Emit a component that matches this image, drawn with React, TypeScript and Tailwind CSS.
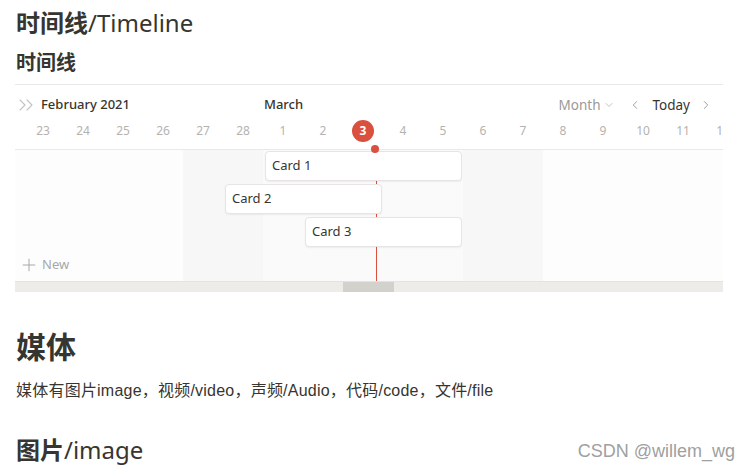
import React from "react";
import { ChevronsRight, ChevronDown, ChevronLeft, ChevronRight, Plus } from "lucide-react";

const FONT = { fontFamily: '"Noto Sans", "Noto Sans CJK SC", sans-serif' };

type Day = { label: string; kind: "weekend" | "mid" | "plain" };

const days: Day[] = [
  { label: "22", kind: "plain" },
  { label: "23", kind: "plain" },
  { label: "24", kind: "plain" },
  { label: "25", kind: "plain" },
  { label: "26", kind: "plain" },
  { label: "27", kind: "weekend" },
  { label: "28", kind: "weekend" },
  { label: "1", kind: "mid" },
  { label: "2", kind: "mid" },
  { label: "3", kind: "mid" },
  { label: "4", kind: "mid" },
  { label: "5", kind: "mid" },
  { label: "6", kind: "weekend" },
  { label: "7", kind: "weekend" },
  { label: "8", kind: "plain" },
  { label: "9", kind: "plain" },
  { label: "10", kind: "plain" },
  { label: "11", kind: "plain" },
  { label: "12", kind: "plain" },
  { label: "13", kind: "plain" },
];

function Card({ left, top, width, title }: { left: number; top: number; width: number; title: string }) {
  return (
    <div
      className="absolute h-[30px] bg-white border border-[#e6e5e3] rounded-[4px] shadow-[0_1px_2px_rgba(15,15,15,0.06)] flex items-center pl-[6px] text-[13px] text-[#37352f]"
      style={{ left, top, width }}
    >
      {title}
    </div>
  );
}

export default function App() {
  return (
    <div className="relative w-[750px] h-[471px] bg-white overflow-hidden text-[#37352f]" style={FONT}>
      <div className="pl-[15px] w-[723px] pt-[7px]">
        <h1 className="text-[24px] leading-[31px] pl-[1px]">
          <span className="font-bold">时间线</span>
          <span className="font-normal">/Timeline</span>
        </h1>
        <h2 className="mt-[12px] text-[20px] leading-[26px] font-bold pl-[1px]">时间线</h2>

        <div className="mt-[8px] border-t border-[#e9e9e7] relative overflow-hidden">
          {/* header */}
          <div className="relative border-b border-[#e9e9e7]">
            <div className="mt-[7px] h-[26px] flex items-center text-[13px]">
              <ChevronsRight size={24} strokeWidth={1.1} className="text-[#c4c3c0] -ml-[1px]" />
              <span className="ml-[3px] font-medium w-[223px]">February 2021</span>
              <span className="font-medium">March</span>
              <div className="ml-auto flex items-center mr-[10px]">
                <span className="text-[#9b9a97] text-[13.5px]">Month</span>
                <ChevronDown size={12} strokeWidth={1.5} className="text-[#b0afac] ml-[2px]" />
                <ChevronLeft size={14} strokeWidth={1.6} className="text-[#9b9a97] ml-[13px]" />
                <span className="ml-[11px] text-[13.5px]">Today</span>
                <ChevronRight size={14} strokeWidth={1.6} className="text-[#9b9a97] ml-[9px]" />
              </div>
            </div>
            <div className="h-[26px] flex -ml-[32px] text-[12px] text-[#b4b3b0]">
              {days.map((d) => (
                <div key={d.label} className="w-[40px] shrink-0 flex items-center justify-center">
                  {d.label === "3" ? (
                    <span className="w-[22px] h-[22px] rounded-full bg-[#d9503f] text-white font-bold flex items-center justify-center">
                      3
                    </span>
                  ) : (
                    d.label
                  )}
                </div>
              ))}
            </div>
            <div className="h-[5px]" />
          </div>

          {/* body */}
          <div className="relative h-[131px]">
            <div className="absolute inset-0 flex -ml-[32px]">
              {days.map((d) => (
                <div
                  key={d.label}
                  className={
                    "w-[40px] shrink-0 h-full " +
                    (d.kind === "weekend" ? "bg-[#f7f7f7]" : d.kind === "mid" ? "bg-[#fafafa]" : "bg-[#fdfdfd]")
                  }
                />
              ))}
            </div>
            <div className="absolute left-[361px] top-0 bottom-0 w-[1px] bg-[#d9503f]" />
            <Card left={250} top={1} width={197} title="Card 1" />
            <Card left={210} top={34} width={157} title="Card 2" />
            <Card left={290} top={67} width={157} title="Card 3" />
            <div className="absolute left-[4px] top-[105px] flex items-center text-[13px] text-[#a9a8a5]">
              <Plus size={20} strokeWidth={1.2} />
              <span className="ml-[3px]">New</span>
            </div>
          </div>

          {/* red dot on header border */}
          <div className="absolute left-[356px] top-[60px] w-[8px] h-[8px] rounded-full bg-[#d9503f]" />

          {/* scrollbar */}
          <div className="h-[11px] bg-[#edece9] border-t border-[#e4e3df] relative">
            <div className="absolute left-[328px] top-0 bottom-0 w-[51px] bg-[#d3d1cb]" />
          </div>
        </div>

        <h1 className="mt-[35px] text-[30px] leading-[39px] font-bold pl-[1px]">媒体</h1>
        <p
          className="mt-[14px] text-[16px] leading-[21px] pl-[1px] tracking-[0.22px]"
          style={{ fontFamily: '"Liberation Sans", "Noto Sans CJK SC", sans-serif' }}
        >
          媒体有图片image，视频/video，声频/Audio，代码/code，文件/file
        </p>
        <h2 className="mt-[33px] text-[24px] leading-[31px] pl-[1px]">
          <span className="font-bold">图片</span>
          <span className="font-normal">/image</span>
        </h2>
      </div>

      <div
        className="absolute right-[15px] top-[438px] text-[18px] leading-[26px] text-[#a0a0a0]"
        style={{ fontFamily: '"Liberation Sans", Arial, sans-serif' }}
      >
        CSDN @willem_wg
      </div>
    </div>
  );
}
